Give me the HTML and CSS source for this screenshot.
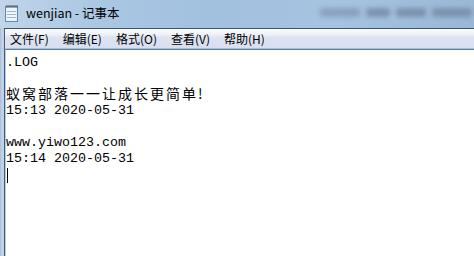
FILE: index.html
```
<!DOCTYPE html>
<html>
<head>
<meta charset="utf-8">
<link rel="stylesheet" href="styles.css">
</head>
<body>
<div class="window">
  <div class="titlebar">
    <svg class="app-icon" width="16" height="18" viewBox="0 0 16 18">
      <rect x="1.5" y="2.5" width="12" height="15" fill="#dbe9f7" stroke="#6b87a8"/>
      <rect x="2.5" y="3.5" width="10" height="13" fill="#eef5fc"/>
      <line x1="3" y1="7.5" x2="12" y2="7.5" stroke="#9fb7d2"/>
      <line x1="3" y1="10.5" x2="12" y2="10.5" stroke="#9fb7d2"/>
      <line x1="3" y1="13.5" x2="12" y2="13.5" stroke="#9fb7d2"/>
      <g stroke="#4a5a6e" stroke-width="1" fill="none">
        <path d="M3 1v3M5 1v3M7 1v3M9 1v3M11 1v3M13 1v3"/>
      </g>
    </svg>
    <span class="title">wenjian - 记事本</span>
    <div class="glass-blur"><span class="b1"></span><span class="b2"></span><span class="b3"></span><span class="b4"></span></div>
  </div>
  <div class="body-row">
    <div class="frame-left"></div>
    <div class="client">
      <div class="menubar">
        <span class="menu-item">文件(F)</span>
        <span class="menu-item">编辑(E)</span>
        <span class="menu-item">格式(O)</span>
        <span class="menu-item">查看(V)</span>
        <span class="menu-item">帮助(H)</span>
      </div>
      <div class="editor">
        <div class="line lat">.LOG</div>
        <div class="line"></div>
        <div class="line cjk">蚁窝部落一一让成长更简单!</div>
        <div class="line lat">15:13 2020-05-31</div>
        <div class="line"></div>
        <div class="line lat">www.yiwo123.com</div>
        <div class="line lat">15:14 2020-05-31</div>
        <div class="line"><span class="caret"></span></div>
      </div>
    </div>
  </div>
</div>
</body>
</html>
```
FILE: styles.css
```
* { box-sizing: border-box; }
html, body { margin: 0; padding: 0; }
body { width: 474px; height: 256px; overflow: hidden; background: #fff; }
.window { display: flex; flex-direction: column; width: 474px; height: 256px; }
.titlebar {
  height: 28px;
  display: flex;
  align-items: center;
  background: linear-gradient(90deg, #c0d5ea 0%, #aac7e3 20%, #a2c1df 45%, #a6c3e0 70%, #9ab8d6 100%);
  padding-left: 4px;
  overflow: hidden;
}
.app-icon { flex: none; margin-top: -2px; }
.title {
  margin-left: 6px;
  font-family: "Noto Sans CJK SC", "Noto Sans", sans-serif;
  font-size: 12.5px;
  color: #000;
  line-height: 14px;
  margin-top: -3px;
}
.glass-blur {
  margin-left: auto;
  margin-right: 2px;
  display: flex;
  gap: 6px;
  align-items: center;
  filter: blur(2.5px);
  opacity: 0.75;
  margin-top: -4px;
}
.glass-blur span { display: block; height: 9px; background: #6f84a0; border-radius: 2px; }
.glass-blur .b1 { width: 40px; opacity: 0.7; }
.glass-blur .b2 { width: 24px; }
.glass-blur .b3 { width: 30px; }
.glass-blur .b4 { width: 40px; }
.body-row { flex: 1; display: flex; min-height: 0; }
.frame-left {
  width: 4px;
  background: linear-gradient(90deg, #a9bdd4, #c6d7ea 60%, #b6cbe2);
}
.client {
  flex: 1;
  display: flex;
  flex-direction: column;
  border-top: 1px solid #44505e;
  border-left: 1px solid #4e5c6c;
  background: #fff;
}
.menubar {
  height: 20px;
  display: flex;
  align-items: center;
  padding-left: 0;
  background: linear-gradient(180deg, #fbfcfe 0%, #edf0f8 30%, #dde3f1 45%, #d8dff0 100%);
  border-bottom: 1px solid #b4bdd0;
}
.menu-item {
  font-family: "Noto Sans CJK SC", "Noto Sans", sans-serif;
  font-size: 12px;
  color: #000;
  padding: 0 5px;
  margin-right: 4px;
  line-height: 16px;
}
.editor {
  flex: 1;
  border-top: 1px solid #4f82bc;
  border-left: 1px solid #a8cdf2;
  padding-top: 5px;
  padding-left: 0;
}
.line { height: 16px; line-height: 16px; white-space: pre; overflow: visible; }
.lat {
  font-family: "Liberation Mono", "DejaVu Sans Mono", monospace;
  font-size: 13.33px;
  color: #000;
}
.cjk {
  font-family: "Noto Sans CJK SC", sans-serif;
  font-size: 14px;
  color: #000;
  letter-spacing: 2px;
  margin-top: -2px;
  margin-bottom: 2px;
}
.caret { display: block; width: 1px; height: 15px; background: #000; margin-left: 1px; margin-top: 1px; }
```
